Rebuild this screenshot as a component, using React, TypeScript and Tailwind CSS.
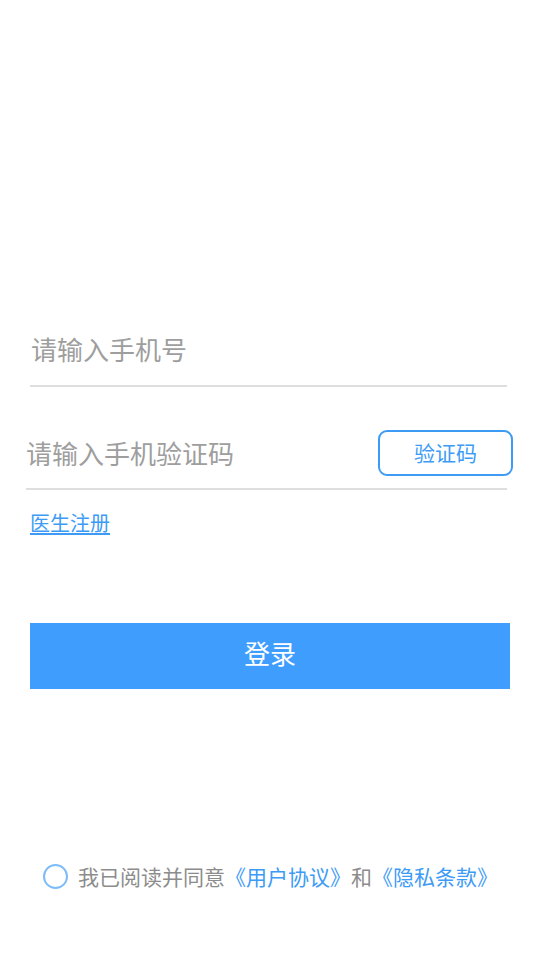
import React, { useState } from "react";

const App = () => {
  const [agree, setAgree] = useState(false);
  const [phone, setPhone] = useState("");
  const [code, setCode] = useState("");

  return (
    <div
      className="w-[540px] h-[960px] bg-white overflow-hidden pt-[317px]"
      style={{ fontFamily: '"Noto Sans CJK SC", "Noto Sans", sans-serif' }}
    >
      {/* phone */}
      <div className="ml-[30px] w-[477px] pt-[14px] pb-[18px] border-b-2 border-[#dedede]">
        <input
          value={phone}
          onChange={(e) => setPhone(e.target.value)}
          placeholder="请输入手机号"
          className="w-full h-[36px] pl-px text-[26px] leading-[36px] text-[#333] placeholder:text-[#9e9e9e] outline-none bg-transparent"
        />
      </div>

      {/* code */}
      <div className="ml-[26px] w-[487px] mt-[43px] h-[46px] flex items-center justify-between">
        <input
          value={code}
          onChange={(e) => setCode(e.target.value)}
          placeholder="请输入手机验证码"
          className="flex-1 h-[36px] text-[26px] leading-[36px] text-[#333] placeholder:text-[#9e9e9e] outline-none bg-transparent"
        />
        <button className="w-[135px] h-[46px] rounded-[9px] border-2 border-[#3d9bf6] text-[#3d9bf6] text-[21px] flex items-center justify-center">
          验证码
        </button>
      </div>
      <div className="ml-[26px] w-[481px] h-[2px] bg-[#dedede] mt-[12px]" />

      <div className="ml-[30px] mt-[21px] h-[24px] flex items-center">
        <a className="text-[20px] leading-[24px] text-[#3d9bf6] underline underline-offset-2 cursor-pointer">
          医生注册
        </a>
      </div>

      {/* login */}
      <button className="ml-[30px] mt-[88px] w-[480px] h-[66px] bg-[#3f9dfd] text-white text-[26px] leading-none pb-[6px] flex items-center justify-center">
        登录
      </button>

      {/* agreement */}
      <div className="mt-[172px] ml-[43px] h-[30px] flex items-center">
        <button
          onClick={() => setAgree(!agree)}
          className={
            agree
              ? "w-[25px] h-[25px] rounded-full border-2 border-[#7dbcf8] bg-[#7dbcf8]"
              : "w-[25px] h-[25px] rounded-full border-2 border-[#7dbcf8]"
          }
        />
        <p className="ml-[10px] text-[21px] leading-[30px] text-[#8c8c8c] whitespace-nowrap">
          我已阅读并同意<span className="text-[#3d9bf6]">《用户协议》</span>和
          <span className="text-[#3d9bf6]">《隐私条款》</span>
        </p>
      </div>
    </div>
  );
};

export default App;
